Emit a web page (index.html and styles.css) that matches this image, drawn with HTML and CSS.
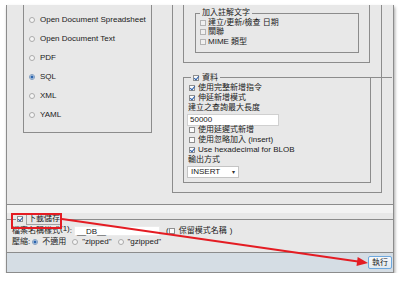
FILE: index.html
```html
<!DOCTYPE html>
<html>
<head lang="zh-Hant">
    <meta charset="UTF-8">
    <title>匯出</title>
    <link rel="stylesheet" href="styles.css">
</head>
<body>
<div class="shot">
    <!--匯出格式與選項-->
    <div class="options">
        <div class="cols">
            <div class="formats">
                <label class="opt"><i class="rd"></i><span class="en">Open Document Spreadsheet</span></label>
                <label class="opt"><i class="rd"></i><span class="en">Open Document Text</span></label>
                <label class="opt"><i class="rd"></i><span class="en">PDF</span></label>
                <label class="opt"><i class="rd on"></i><span class="en">SQL</span></label>
                <label class="opt"><i class="rd"></i><span class="en">XML</span></label>
                <label class="opt"><i class="rd"></i><span class="en">YAML</span></label>
            </div>
            <div class="sql">
                <div class="structure">
                    <fieldset class="comments">
                        <legend>加入註解文字</legend>
                        <label class="row"><i class="cb off"></i>建立/更新/檢查 日期</label>
                        <label class="row"><i class="cb off"></i>關聯</label>
                        <label class="row"><i class="cb off"></i><span class="en">MIME</span>&nbsp;類型</label>
                    </fieldset>
                </div>
                <!--資料-->
                <fieldset class="data">
                    <legend><i class="cb on"></i>資料</legend>
                    <label class="row"><i class="cb on"></i>使用完整新增指令</label>
                    <label class="row"><i class="cb on"></i>伸延新增模式</label>
                    <div class="row plain">建立之查詢最大長度</div>
                    <span class="num en">50000</span>
                    <label class="row"><i class="cb"></i>使用延遲式新增</label>
                    <label class="row"><i class="cb"></i>使用忽略加入&nbsp;<span class="en">(insert)</span></label>
                    <label class="row"><i class="cb on"></i><span class="en">Use hexadecimal for BLOB</span></label>
                    <div class="row plain">輸出方式</div>
                    <div class="pick"><span class="en">INSERT</span><span class="arr">&#9662;</span></div>
                </fieldset>
            </div>
        </div>
    </div>

    <!--下載儲存-->
    <div class="savewrap">
        <fieldset class="save">
            <legend><i class="cb on"></i><span class="lbl">下載儲存</span></legend>
            <div class="line">
                <span>檔案名稱樣式</span><sup class="en">(1)</sup><span>:</span>
                <span class="tpl en">__DB__</span>
                <span class="paren">(</span><i class="cb"></i><span>保留模式名稱</span><span class="paren">)</span>
            </div>
            <div class="line">
                <span>壓縮:</span>
                <i class="rd on"></i><span>不適用</span>
                <i class="rd"></i><span class="en">"zipped"</span>
                <i class="rd"></i><span class="en">"gzipped"</span>
            </div>
        </fieldset>
    </div>
    <div class="foot"><button class="go">執行</button></div>
</div>

<!--標示-->
<svg class="marks" viewBox="0 0 400 281">
    <rect x="12" y="214" width="49" height="14" fill="none" stroke="#e41c23" stroke-width="2"/>
    <line x1="62" y1="219" x2="358" y2="261.5" stroke="#e41c23" stroke-width="2"/>
    <polygon points="368,263 357.7,256.9 356.5,265.9" fill="#e41c23"/>
</svg>
</body>
</html>
```

FILE: styles.css
```css
*{
    margin:0;
    padding:0;
    box-sizing:border-box;
}
body{
    background:#fff;
    font:8px/10px "Liberation Sans","Noto Sans CJK TC",sans-serif;
    color:#1a1a1a;
}
.en{
    font-family:"Liberation Sans",sans-serif;
    font-size:8px;
}
.shot{
    width:388px;
    margin:5px 0 0 6px;
    border:1px solid #8c8c8c;
    border-top:0;
    background:#f3f3f3;
    box-shadow:1px 2px 3px rgba(0,0,0,.35);
}
.options{
    height:200px;
    overflow:hidden;
    background:#e8e8e8;
    border-bottom:1px solid #8c8c8c;
}
.cols{
    display:flex;
    align-items:flex-start;
    margin-top:-20px;
}
fieldset{
    border:1px solid #8c8c8c;
    min-width:0;
}
legend{
    line-height:10px;
    padding:0 2px;
}
/*格式*/
.formats{
    width:129px;
    margin-left:16px;
    border:1px solid #8c8c8c;
    padding:24px 0 8px 5px;
}
.opt{
    display:flex;
    align-items:center;
    height:19px;
    white-space:nowrap;
}
.rd{
    display:inline-block;
    width:6px;
    height:6px;
    border-radius:50%;
    border:1px solid #ababab;
    background:#f5f5f5;
    margin-right:5px;
    flex:none;
}
.rd.on{
    border-color:#7f9cbf;
    background:radial-gradient(circle,#2a64ad 0 1.3px,#e6edf6 1.8px);
}
.cb{
    display:inline-block;
    width:6px;
    height:6px;
    border:1px solid #8f8f8f;
    background:#fbfbfb;
    margin-right:3px;
    position:relative;
    flex:none;
}
.cb.off{
    border-color:#b3b3b3;
    background:#f0f0f0;
}
.cb.on::after{
    content:"";
    position:absolute;
    left:1px;
    top:-1px;
    width:2px;
    height:4px;
    border:solid #2d5fa8;
    border-width:0 1px 1px 0;
    transform:rotate(40deg);
}
/*SQL 選項*/
.sql{
    width:210px;
    margin-left:20px;
    border:1px solid #8c8c8c;
    padding:0 11px 9px 10px;
}
.structure{
    border:1px solid #8c8c8c;
    padding:21px 10px 9px 11px;
}
.comments{
    padding:0 4px 5px 4px;
}
.comments .row{
    height:9.5px;
}
.comments .cb{
    margin-right:2px;
}
.row{
    display:flex;
    align-items:center;
    height:10px;
    white-space:nowrap;
}
.data{
    margin:10px -1px 0 0;
    padding:0 4px 4px 4px;
    position:relative;
}
.data::after{
    content:"";
    position:absolute;
    left:100%;
    top:-6px;
    width:22px;
    border-top:1px solid #8c8c8c;
}
.data legend{
    margin-left:3px;
    display:flex;
    align-items:center;
}
.data .row .cb{
    margin-left:1px;
}
.num{
    display:block;
    width:92px;
    height:12px;
    line-height:10px;
    margin:1px 0 -1px -1px;
    padding:0 2px;
    border:1px solid #d0d0d0;
    background:#fff;
}
.pick{
    display:flex;
    justify-content:space-between;
    align-items:center;
    width:52px;
    height:12px;
    margin:1px 0 0 -1px;
    padding:0 3px 0 3px;
    border:1px solid #c4c4c4;
    background:#fff;
}
.arr{
    font-size:6px;
    color:#333;
}
/*下載儲存*/
.savewrap{
    margin-top:8px;
    background:#e8e8e8;
}
.save{
    margin-top:2px;
    border:0;
    border-top:1px solid #8c8c8c;
    padding:0 5px 5px 5px;
}
.save legend{
    display:flex;
    align-items:center;
    margin-left:4px;
    padding:0 1px;
    line-height:10px;
}
.lbl{
    display:inline-block;
    border:1px solid #a2a2a2;
    padding:0 1px;
}
.line{
    display:flex;
    align-items:center;
    height:11px;
    white-space:nowrap;
}
sup{
    font-size:6px;
    line-height:6px;
    align-self:flex-start;
    margin:1px 0 0 0;
}
.tpl{
    display:inline-block;
    width:86px;
    height:10px;
    line-height:9px;
    margin:0 3px 0 2px;
    padding:0 2px;
    border:1px solid #ececec;
    background:#fff;
}
.paren{
    margin:0 4px 0 0;
}
.line .cb{
    margin-right:4px;
}
.line span + .paren{
    margin:0 0 0 3px;
}
.line .rd{
    margin:0 4px 0 2px;
}
.line .rd ~ .rd{
    margin-left:6px;
}
.foot{
    height:20px;
    border-top:1px solid #8c8c8c;
    background:#d5dde4;
    display:flex;
    justify-content:flex-end;
    align-items:center;
    padding:0 1px 1px 0;
}
.go{
    width:24px;
    height:13px;
    font:8px/11px "Liberation Sans","Noto Sans CJK TC",sans-serif;
    color:#1a1a1a;
    border:1px solid #6ea8de;
    border-radius:2px;
    background:linear-gradient(#f7f9fb,#e2e9ef);
}
/*紅色標示*/
.marks{
    position:absolute;
    left:0;
    top:0;
    width:400px;
    height:281px;
    pointer-events:none;
}
```
